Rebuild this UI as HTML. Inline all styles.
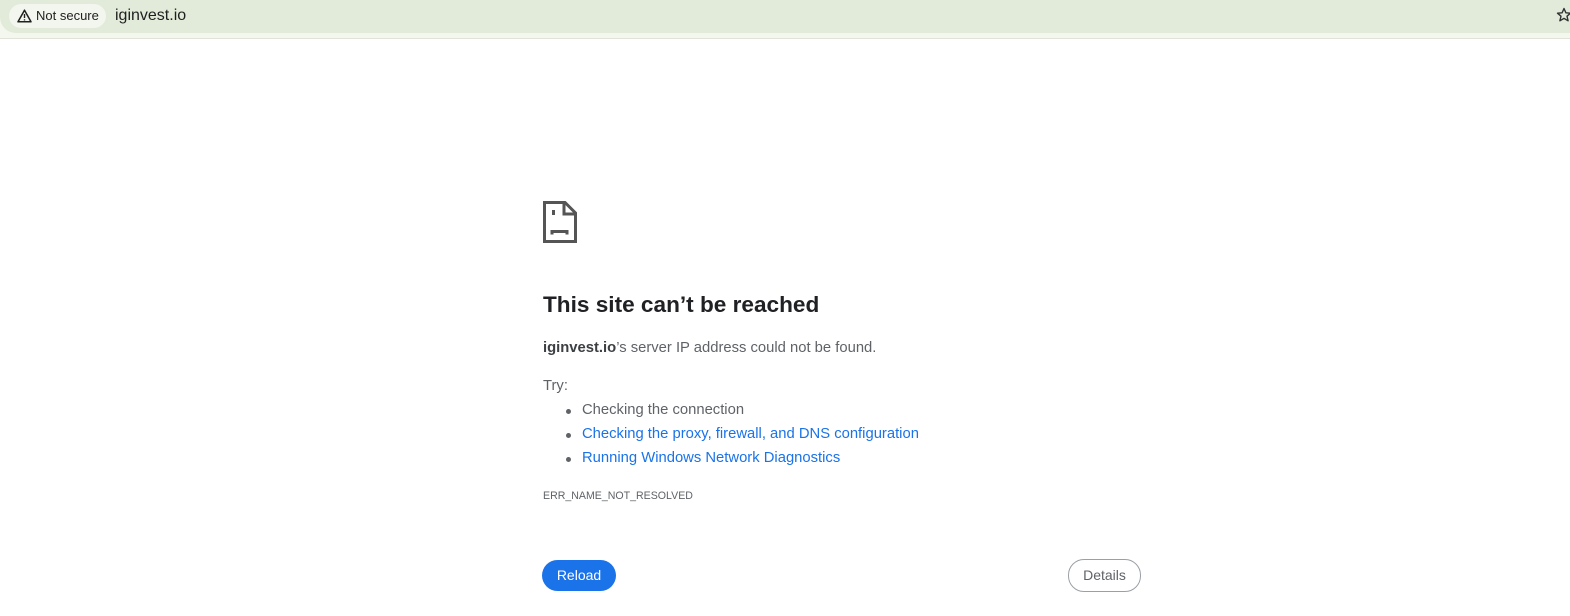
<!DOCTYPE html>
<html><head><meta charset="utf-8"><style>
body{margin:0;width:1570px;height:616px;background:#fff;font-family:"Liberation Sans",Arial,sans-serif;position:relative;overflow:hidden}
.top{position:absolute;left:0;top:0;width:1570px;height:38px;background:#f3f7ee;border-bottom:1px solid #dfe3da}
.field{position:absolute;left:0;top:0;width:1570px;height:33px;background:#e2ebd9;border-radius:0 0 0 16px}
.pill{position:absolute;left:9px;top:4px;width:97px;height:24px;border-radius:12px;background:#f2f6ee;font-size:13px;color:#1f1f1f;line-height:24px}
.pill svg{position:absolute;left:8px;top:5px}
.pill span{position:absolute;left:27px}
.url{position:absolute;left:115px;top:7px;font-size:16px;color:#1f1f1f}
.a{position:absolute;left:543px;color:#5f6368;font-size:14.8px;white-space:nowrap}
h1{position:absolute;left:543px;top:292px;margin:0;font-size:22.6px;color:#202124;font-weight:bold}
.blue{color:#1a73e8}
.dot{position:absolute;left:566px;width:5px;height:5px;border-radius:50%;background:#5f6368}
.btn{position:absolute;top:559px;height:31px;border-radius:16px;font-size:14px;line-height:31px;text-align:center}
.eye{position:absolute;left:552px;top:210px;width:3px;height:5px;background:#555}
</style></head><body>
<div class="top"><div class="field"></div>
<div class="pill"><svg width="15" height="14" viewBox="0 0 15 14"><path d="M7.5 1.2L1 12.8h13z" fill="none" stroke="#1f1f1f" stroke-width="1.5" stroke-linejoin="round"/><path d="M7.5 5v4M7.5 10.2v1.3" stroke="#1f1f1f" stroke-width="1.4"/></svg><span>Not secure</span></div>
<div class="url">iginvest.io</div>
<svg style="position:absolute;left:1556px;top:7px" width="16" height="16" viewBox="0 0 16 16"><path d="M8 1.5l1.9 4.3 4.6.4-3.5 3 1.1 4.6L8 11.4l-4.1 2.4 1.1-4.6-3.5-3 4.6-.4z" fill="none" stroke="#333" stroke-width="1.4" stroke-linejoin="round"/></svg>
</div>
<svg style="position:absolute;left:543px;top:201px" width="34" height="42" viewBox="0 0 34 42"><path d="M1.5 1.5H22L32.5 12v28.5H1.5z" fill="none" stroke="#555" stroke-width="3"/><path d="M21 1.5V13h11.5" fill="none" stroke="#555" stroke-width="3"/><path d="M9 33.5v-3h15v3" fill="none" stroke="#555" stroke-width="3"/></svg>
<div class="eye"></div>
<h1>This site can’t be reached</h1>
<div class="a" style="top:340px"><b style="color:#3c4043">iginvest.io</b>’s server IP address could not be found.</div>
<div class="a" style="top:378px">Try:</div>
<div class="dot" style="top:409px"></div><div class="a" style="left:582px;top:402px">Checking the connection</div>
<div class="dot" style="top:433px"></div><div class="a blue" style="left:582px;top:426px">Checking the proxy, firewall, and DNS configuration</div>
<div class="dot" style="top:457px"></div><div class="a blue" style="left:582px;top:450px">Running Windows Network Diagnostics</div>
<div class="a" style="top:490px;font-size:10.6px">ERR_NAME_NOT_RESOLVED</div>
<div class="btn" style="left:542px;width:74px;background:#1a73e8;color:#fff;top:560px">Reload</div>
<div class="btn" style="left:1068px;width:71px;border:1px solid #9aa0a6;color:#5f6368;background:#fff">Details</div>
</body></html>
